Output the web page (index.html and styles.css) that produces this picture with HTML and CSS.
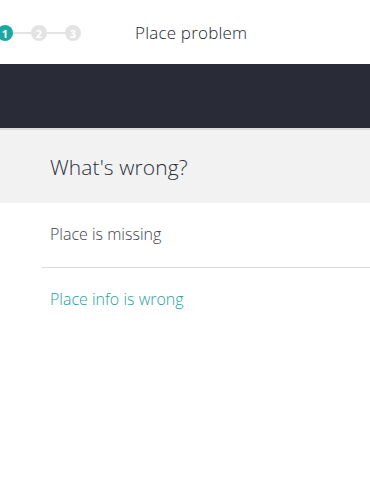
FILE: index.html
```html
<!DOCTYPE html>
<html>
<head>
<meta charset="utf-8">
<link rel="stylesheet" href="styles.css">
</head>
<body>
<header class="topbar">
  <div class="stepper">
    <span class="step active">1</span>
    <span class="line"></span>
    <span class="step">2</span>
    <span class="line"></span>
    <span class="step">3</span>
  </div>
  <div class="title">Place problem</div>
</header>
<div class="band"></div>
<section class="question">
  <h1>What's wrong?</h1>
</section>
<ul class="options">
  <li class="option">Place is missing</li>
  <li class="option accent">Place info is wrong</li>
</ul>
</body>
</html>
```
FILE: styles.css
```css
html, body {
  margin: 0;
  padding: 0;
  background: #fff;
  font-family: "Open Sans", "Noto Sans", sans-serif;
  font-weight: 300;
  overflow: hidden;
}
.topbar {
  height: 64px;
  display: flex;
  align-items: center;
}
.stepper {
  display: flex;
  align-items: center;
  margin-left: -3px;
  margin-top: 2px;
}
.step {
  width: 16px;
  height: 16px;
  border-radius: 50%;
  background: #e3e3e3;
  color: #fff;
  font-size: 11px;
  font-weight: 700;
  display: flex;
  align-items: center;
  justify-content: center;
  line-height: 1;
}
.step.active {
  background: #1aa8a0;
}
.line {
  width: 18px;
  height: 2px;
  background: #e3e3e3;
}
.title {
  margin-left: 54px;
  font-size: 17px;
  color: #23262f;
  letter-spacing: 0.2px;
}
.band {
  height: 64px;
  background: #292c37;
}
.question {
  background: #f2f2f2;
  border-top: 2px solid #dcdcdc;
  height: 73px;
  display: flex;
  align-items: center;
  padding-left: 50px;
}
.question h1 {
  margin: 0;
  font-size: 21px;
  font-weight: 300;
  color: #2b303b;
  letter-spacing: 0.1px;
}
.options {
  list-style: none;
  margin: 0;
  padding: 0 0 0 42px;
}
.option {
  height: 64px;
  display: flex;
  align-items: center;
  padding-left: 8px;
  padding-bottom: 3px;
  box-sizing: border-box;
  font-size: 16px;
  color: #3f424c;
}
.option + .option {
  border-top: 1px solid #d8dde2;
  padding-bottom: 1px;
}
.option.accent {
  color: #27a09d;
}
```
